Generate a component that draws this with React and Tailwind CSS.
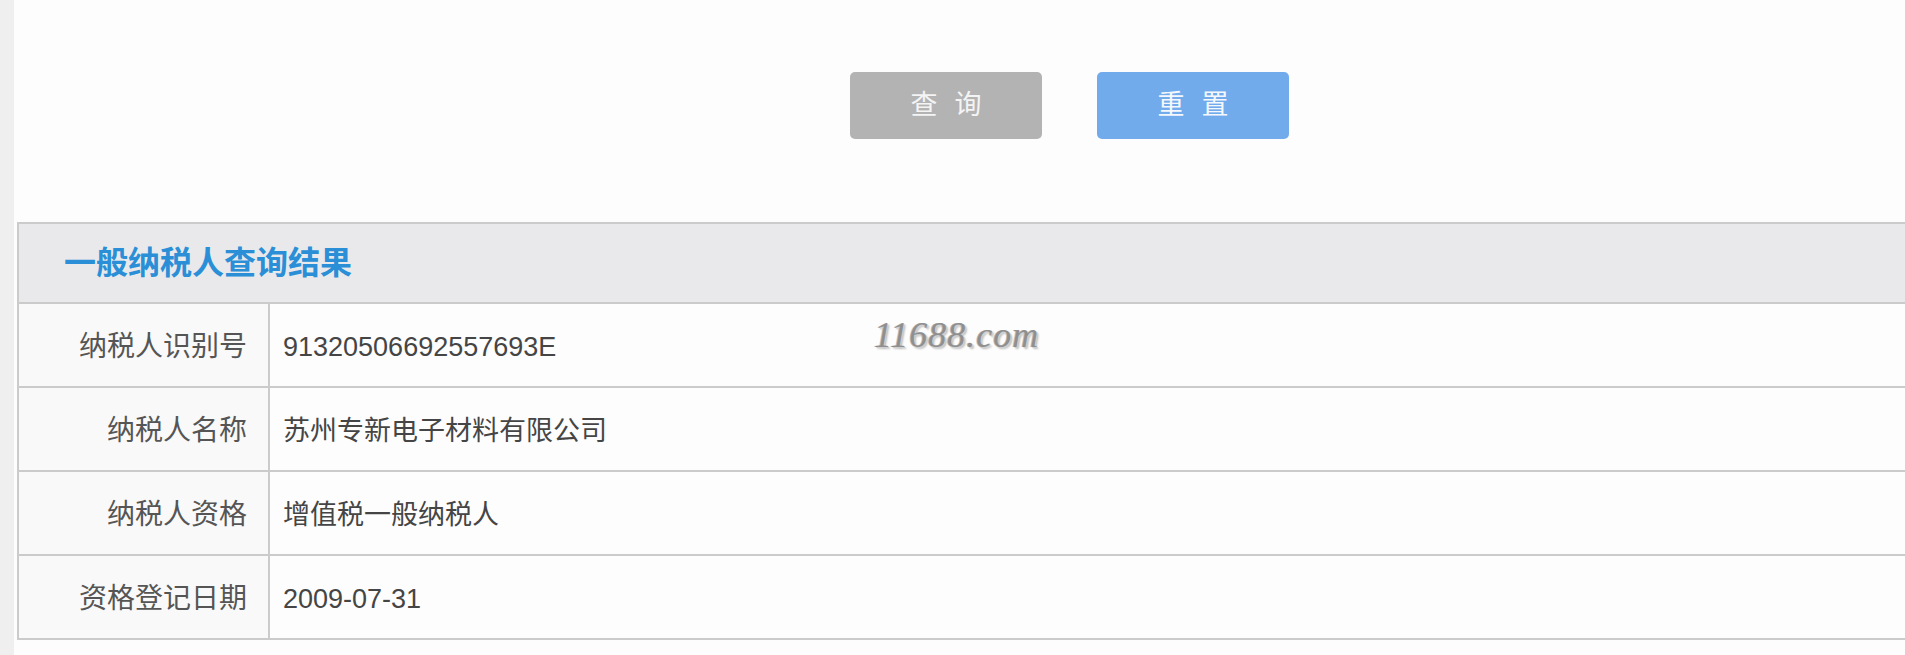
import React from 'react';

const rows = [
  { label: '纳税人识别号', value: '91320506692557693E' },
  { label: '纳税人名称', value: '苏州专新电子材料有限公司' },
  { label: '纳税人资格', value: '增值税一般纳税人' },
  { label: '资格登记日期', value: '2009-07-31' },
];

const App = () => {
  return (
    <div
      className="flex w-[1905px] h-[655px] overflow-hidden bg-[#fdfdfd]"
      style={{ fontFamily: '"Liberation Sans", "Noto Sans CJK SC", sans-serif' }}
    >
      <div className="w-[14px] shrink-0 bg-[#efefef]" />
      <div className="flex-1 flex flex-col pl-[3px]">
        {/* search actions */}
        <div className="flex gap-[55px] pl-[833px] pt-[72px]">
          <button className="w-[192px] h-[67px] rounded-[5px] bg-[#b3b3b3] text-[#f4f4f4] text-[27px] tracking-[17px] pl-[17px]">
            查询
          </button>
          <button className="w-[192px] h-[67px] rounded-[5px] bg-[#72abeb] text-[#f4f8fd] text-[27px] tracking-[17px] pl-[17px]">
            重置
          </button>
        </div>

        {/* result table */}
        <div className="relative mt-[83px] w-[1900px] border-2 border-[#cbcbcb]">
          <div className="h-[80px] flex items-center pl-[45px] bg-[#e9e9eb] border-b-2 border-[#cbcbcb]">
            <span className="text-[32px] font-bold text-[#2a8fd7]">一般纳税人查询结果</span>
          </div>
          {rows.map((row, i) => (
            <div
              key={row.label}
              className={
                i === rows.length - 1
                  ? 'flex h-[82px]'
                  : 'flex h-[84px] border-b-2 border-[#cbcbcb]'
              }
            >
              <div className="w-[251px] shrink-0 flex items-center justify-end pr-[21px] pt-[4px] bg-[#f9f9f9] border-r-2 border-[#cbcbcb] text-[28px] text-[#555]">
                {row.label}
              </div>
              <div className="flex-1 flex items-center pl-[13px] pt-[4px] bg-[#fdfdfd] text-[27px] text-[#454545]">
                {row.value}
              </div>
            </div>
          ))}
          {/* watermark */}
          <div
            className="absolute left-[855px] top-[84px] text-[36px] italic text-[#8f8f8f] tracking-[1px]"
            style={{
              fontFamily: '"Liberation Serif", serif',
              textShadow: '1px 1px 0 #cfcfcf, -1px 0 0 #bdbdbd, 2px 2px 2px #bbb',
            }}
          >
            11688.com
          </div>
        </div>
      </div>
    </div>
  );
};

export default App;
